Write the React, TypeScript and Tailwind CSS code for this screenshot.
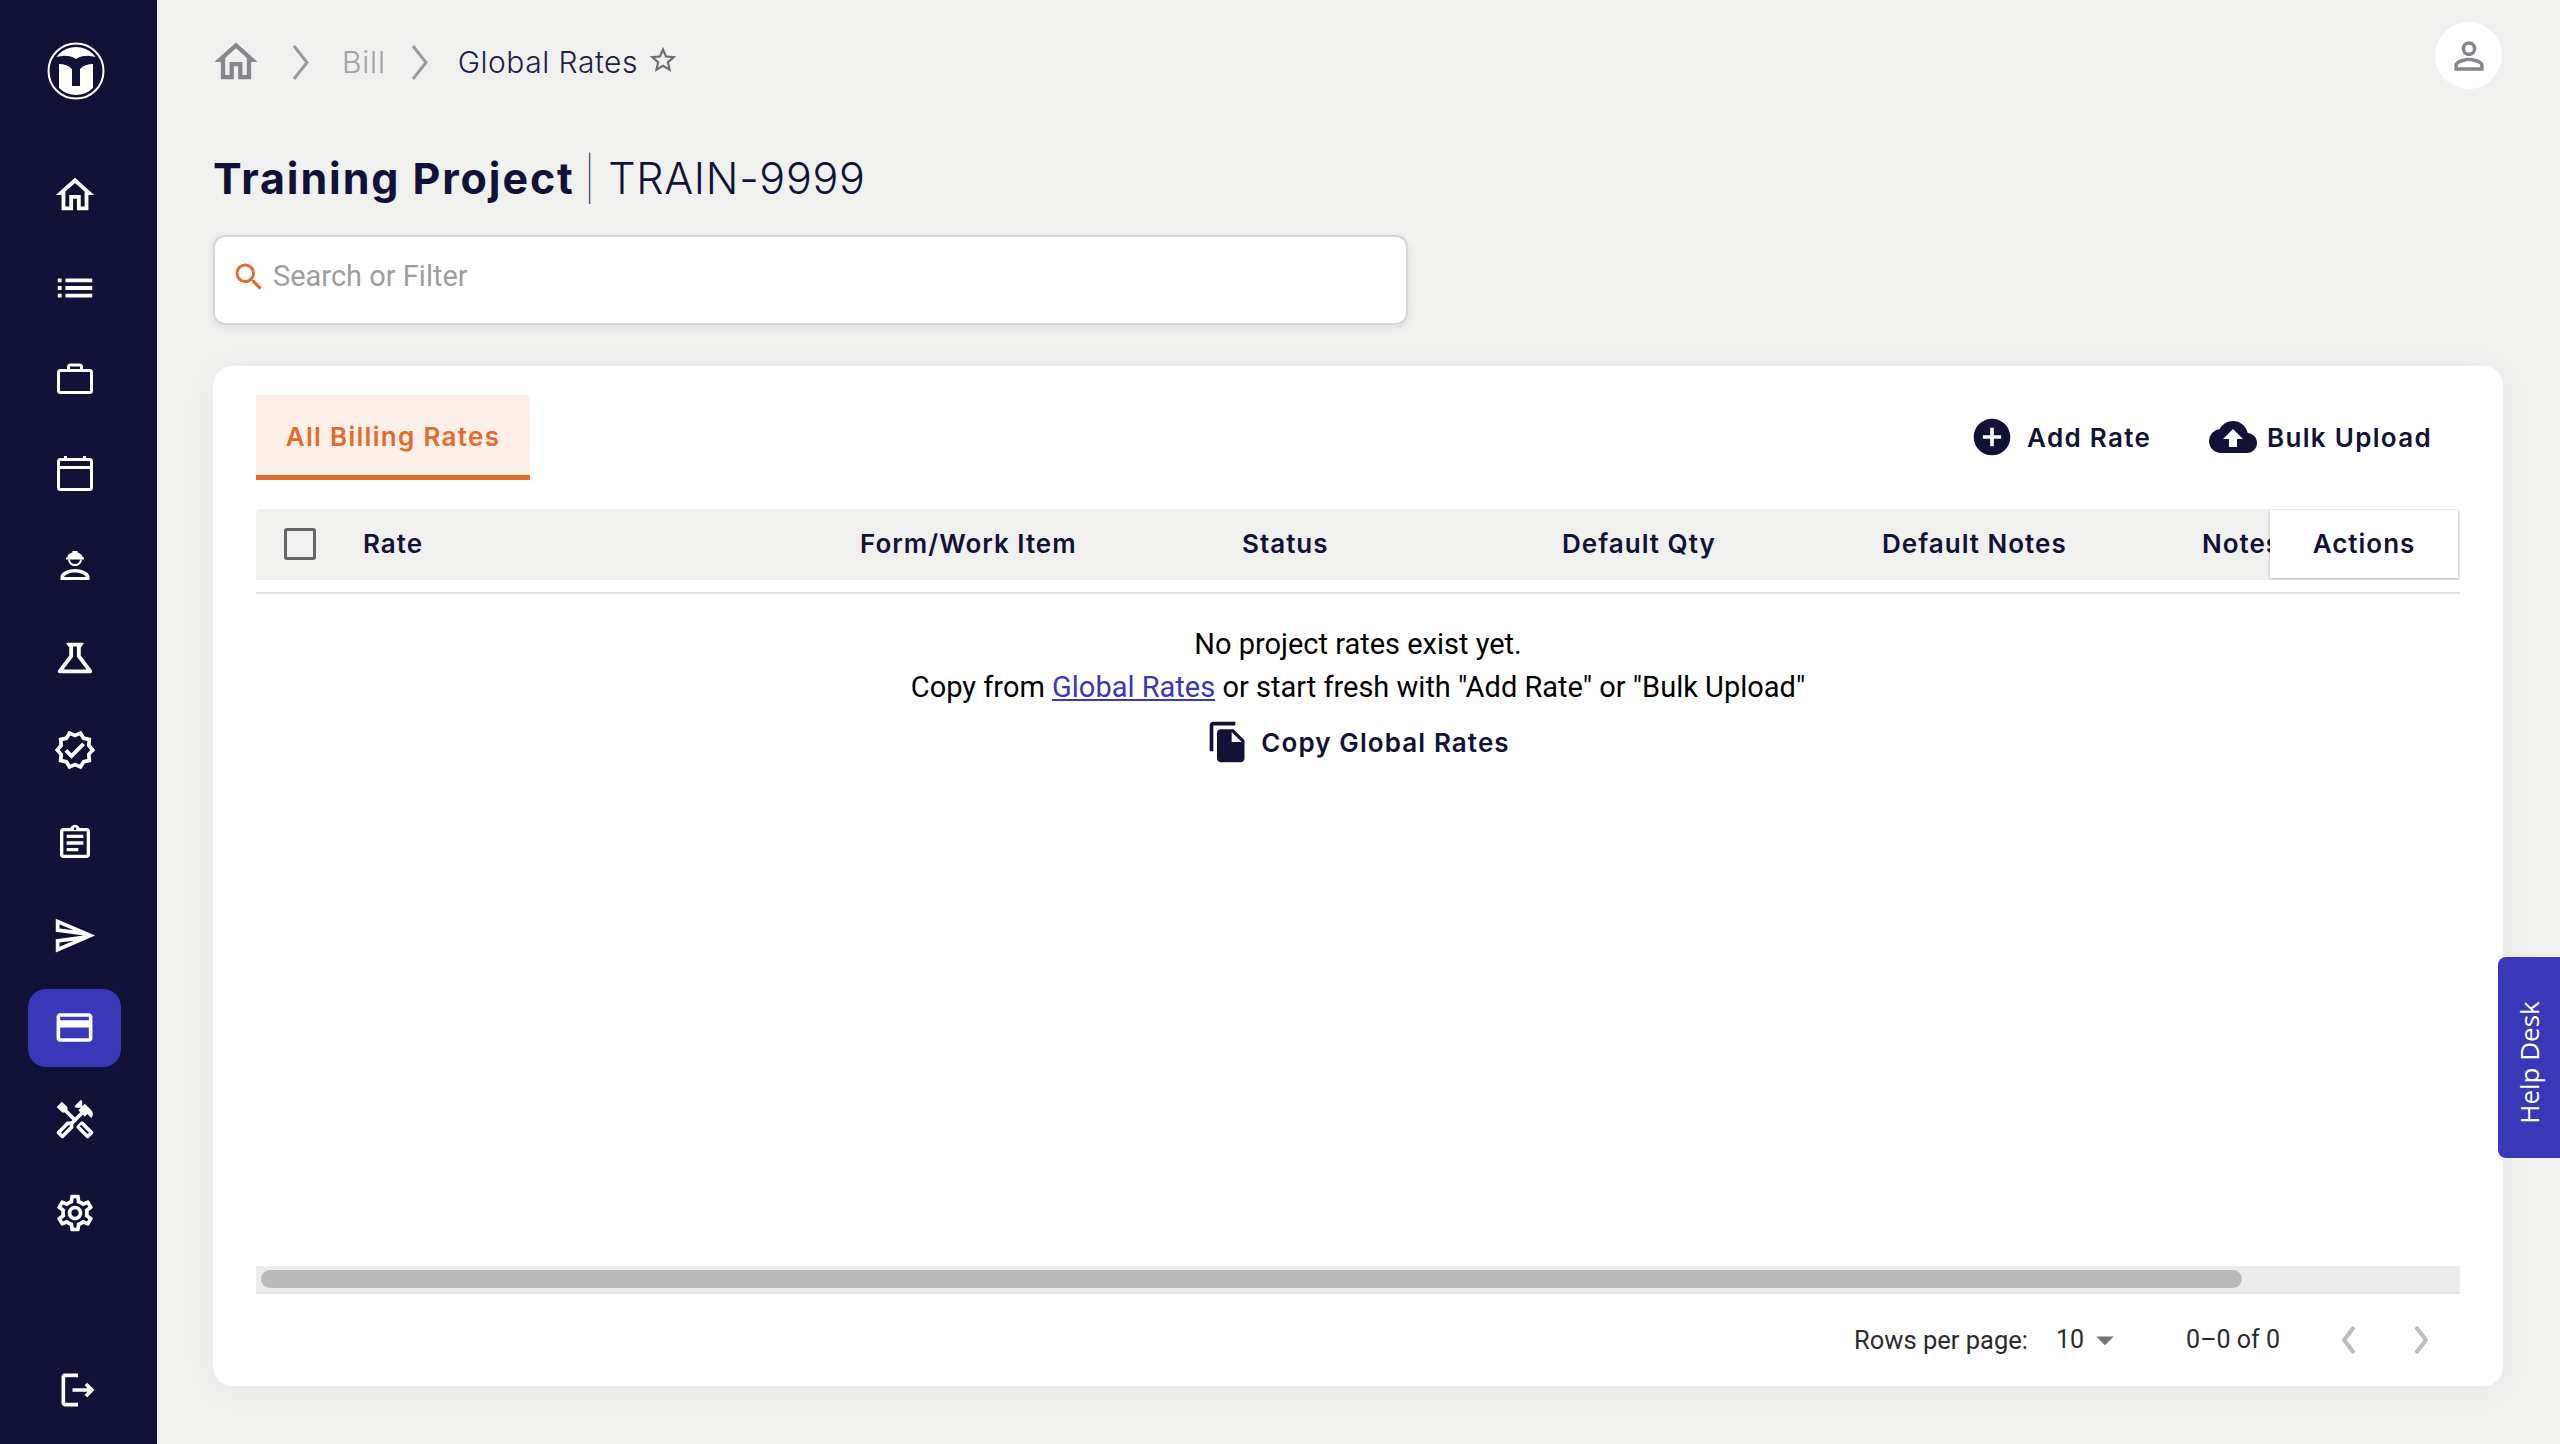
import React from 'react';
import {
  MdOutlineHome,
  MdOutlineList,
  MdOutlineScience,
  MdOutlineVerified,
  MdOutlineAssignment,
  MdOutlineSend,
  MdOutlineCreditCard,
  MdOutlineHandyman,
  MdOutlineSettings,
  MdOutlineLogout,
  MdOutlinePersonOutline,
  MdOutlineStarBorder,
  MdAddCircle,
  MdCloudUpload,
  MdFileCopy,
  MdSearch,
  MdArrowDropDown,
} from 'react-icons/md';

const HEADING = "font-['Inter','Liberation_Sans',sans-serif]";

function Logo() {
  return (
    <svg width="58" height="58" viewBox="0 0 58 58" aria-hidden="true">
      <defs>
        <clipPath id="logo-disk">
          <circle cx="29" cy="29" r="24" />
        </clipPath>
      </defs>
      <circle cx="29" cy="29" r="27.500" fill="none" stroke="white" strokeWidth="2" />
      <g clipPath="url(#logo-disk)" fill="white">
        <path d="M2 18 Q18 10 29 17 Q40 10 56 18 V0 H2 Z" />
        <path d="M12 22 Q20 22 25 27 V44 H33 V27 Q38 22 46 22 V58 H12 Z" />
      </g>
    </svg>
  );
}

function BriefcaseIcon() {
  return (
    <svg width="36" height="36" viewBox="0 0 36 36" fill="none" stroke="white" strokeWidth="3" aria-hidden="true">
      <rect x="1.500" y="8.500" width="33" height="22" rx="2" />
      <path d="M11.500 8V5a2 2 0 0 1 2-2h9a2 2 0 0 1 2 2v3" />
    </svg>
  );
}

function CalendarIcon() {
  return (
    <svg width="36" height="36" viewBox="0 0 36 36" fill="none" stroke="white" strokeWidth="3" aria-hidden="true">
      <rect x="1.500" y="4.500" width="33" height="30" rx="2" />
      <path d="M1.500 12.500h33M8.500 1v4M27.500 1v4" />
    </svg>
  );
}

function WorkerIcon() {
  return (
    <svg width="30" height="30" viewBox="0 0 30 30" fill="white" aria-hidden="true">
      <path d="M12.500 1h5v1.500c3 .8 5 3 5.300 5H24v2H6v-2h1.200c.3-2.500 2.300-4.200 5.300-5z" />
      <path fill="none" stroke="white" strokeWidth="2" d="M9 9.500a6 5.500 0 0 0 12 0" />
      <path
        fillRule="evenodd"
        d="M.5 30v-3C.5 22 8.500 19 15 19s14.500 3 14.500 8v3zm3.500-3h22c-1.500-2.500-6-4.500-11-4.500S5.500 24.500 4 27z"
      />
    </svg>
  );
}

// thin chevron used by breadcrumb and pagination
function Chevron({ dir = 'right', className = '', h = 37, sw = 3 }: { dir?: 'left' | 'right'; className?: string; h?: number; sw?: number }) {
  const w = Math.round(h * 0.45);
  return (
    <svg width={w} height={h} viewBox={`0 0 ${w} ${h}`} fill="none" stroke="currentColor" strokeWidth={sw} className={className} aria-hidden="true">
      <path d={dir === 'right' ? `M2 2L${w - 2} ${h / 2}L2 ${h - 2}` : `M${w - 2} 2L2 ${h / 2}L${w - 2} ${h - 2}`} />
    </svg>
  );
}

const navItems = [
  { key: 'home', icon: <MdOutlineHome size={46} /> },
  { key: 'list', icon: <MdOutlineList size={46} /> },
  { key: 'work', icon: <BriefcaseIcon /> },
  { key: 'calendar', icon: <CalendarIcon /> },
  { key: 'worker', icon: <WorkerIcon /> },
  { key: 'science', icon: <MdOutlineScience size={46} /> },
  { key: 'verified', icon: <MdOutlineVerified size={44} /> },
  { key: 'assignment', icon: <MdOutlineAssignment size={40} /> },
  { key: 'send', icon: <MdOutlineSend size={45} /> },
  { key: 'bill', icon: <MdOutlineCreditCard size={43} />, active: true },
  { key: 'tools', icon: <MdOutlineHandyman size={44} /> },
  { key: 'settings', icon: <MdOutlineSettings size={44} /> },
];

const columns = [
  { label: 'Form/Work Item', w: 'w-[382px]' },
  { label: 'Status', w: 'w-[320px]' },
  { label: 'Default Qty', w: 'w-[320px]' },
  { label: 'Default Notes', w: 'w-[320px]' },
  { label: 'Notes', w: 'w-[320px]' },
];

function Sidebar() {
  return (
    <aside className="w-[157px] shrink-0 h-full bg-[#121238] flex flex-col items-center pr-[8px] text-white">
      <div className="h-[42px] shrink-0" />
      <div className="ml-[3px]">
        <Logo />
      </div>
      <nav className="mt-[56px] flex flex-col">
        {navItems.map((item) => (
          <div
            key={item.key}
            className={
              'w-[93px] h-[78px] mb-[14.5px] rounded-[18px] flex items-center justify-center ' +
              (item.active ? 'bg-[#3838b8]' : '')
            }
          >
            {item.icon}
          </div>
        ))}
      </nav>
      <div className="mt-auto mb-[32px] ml-[6px] text-white">
        <MdOutlineLogout size={44} />
      </div>
    </aside>
  );
}

function Breadcrumb() {
  return (
    <div className="h-[122px] shrink-0 pt-[38px] flex items-start justify-between">
      <div className={`flex items-center h-[48px] text-[30px] ${HEADING}`}>
        <MdOutlineHome size={52} className="text-[#85878f] -ml-[3px]" />
        <Chevron className="text-[#9a9a9a] ml-[30px]" />
        <span className="ml-[33px] text-[#a0a0a4] font-light tracking-[0.8px]">Bill</span>
        <Chevron className="text-[#9a9a9a] ml-[25px]" />
        <span className="ml-[30px] text-[#1e1e46] font-light tracking-[0.5px]">Global Rates</span>
        <MdOutlineStarBorder size={32} className="text-[#6e6e6e] ml-[9px] -mt-[4px]" />
      </div>
      <div className="w-[67px] h-[67px] -mt-[16px] mr-[1px] rounded-full bg-white flex items-center justify-center">
        <MdOutlinePersonOutline size={44} className="text-[#85878f]" />
      </div>
    </div>
  );
}

function TableHeader() {
  const label = `pb-[2px] text-[26px] tracking-[1px] font-semibold text-[#121238] whitespace-nowrap ${HEADING}`;
  return (
    <div className="relative h-[71px] bg-[#f0f0ee] rounded-t-[4px] overflow-hidden flex items-center shrink-0">
      <div className="w-[107px] shrink-0 pl-[28px] pb-[1px]">
        <div className="w-[32px] h-[32px] border-[3px] border-[#666666] rounded-[3px]" />
      </div>
      <div className={`w-[497px] shrink-0 ${label}`}>Rate</div>
      {columns.map((c) => (
        <div key={c.label} className={`${c.w} shrink-0 ${label}`}>
          {c.label}
        </div>
      ))}
      <div className={`absolute right-[2px] top-[1px] bottom-[2px] w-[188px] bg-white shadow-[0_1px_3px_rgba(0,0,0,0.25)] flex items-center justify-center ${label}`}>
        Actions
      </div>
    </div>
  );
}

function EmptyState() {
  return (
    <div className="flex-1 flex flex-col items-center pt-[29px] text-[29px] leading-[43px] text-black font-['Roboto',sans-serif]">
      <div>No project rates exist yet.</div>
      <div>
        Copy from <span className="text-[#3838b8] underline">Global Rates</span> or start fresh with "Add Rate" or "Bulk Upload"
      </div>
      <div className={`mt-[11px] flex items-center gap-[11px] text-[26px] tracking-[1.100px] font-semibold text-[#121238] ${HEADING}`}>
        <MdFileCopy size={44} />
        Copy Global Rates
      </div>
    </div>
  );
}

function Pagination() {
  return (
    <div className="flex-1 flex items-center justify-end text-[25px] text-[#2b2b2b] font-['Roboto',sans-serif]">
      <span className="text-[25.500px]">Rows per page:</span>
      <span className="ml-[28px]">10</span>
      <MdArrowDropDown size={42} className="text-[#757575]" />
      <span className="ml-[60px]">0–0 of 0</span>
      <Chevron dir="left" h={30} sw={4} className="text-[#bdbdbd] ml-[62px]" />
      <Chevron dir="right" h={30} sw={4} className="text-[#bdbdbd] ml-[58px] mr-[32px]" />
    </div>
  );
}

export default function App() {
  return (
    <div className="relative w-[2560px] h-[1444px] overflow-hidden flex bg-[#f0f0ee]">
      <Sidebar />
      <main className="flex-1 min-w-0 flex flex-col pl-[56px] pr-[57px] pb-[58px]">
        <Breadcrumb />
        <h1 className={`h-[113px] shrink-0 pt-[30px] text-[43px] leading-[52px] text-[#121238] font-light tracking-[0.7px] whitespace-nowrap ${HEADING}`}>
          <span className="font-bold tracking-[1.9px]">Training Project</span>
          <span className="ml-[9px] font-thin">|</span>
          <span className="ml-[12px]">TRAIN-9999</span>
        </h1>
        <div className="w-[1195px] h-[90px] shrink-0 bg-white rounded-[12px] border-2 border-[#d6d6d6] shadow-[0_2px_8px_rgba(0,0,0,0.08)] flex items-center pl-[16px] pb-[6px] font-['Roboto',sans-serif] text-[29px] text-[#9e9e9e]">
          <MdSearch size={36} className="text-[#e06c2e]" />
          <span className="ml-[6px]">Search or Filter</span>
        </div>
        <section className="mt-[41px] flex-1 min-h-0 bg-white rounded-[20px] shadow-[0_4px_40px_rgba(0,0,0,0.04)] px-[43px] pt-[29px] flex flex-col">
          <div className="h-[85px] shrink-0 flex items-center justify-between">
            <div className={`h-full w-[274px] pt-[3px] bg-[#fcefe8] border-b-[5px] border-[#e06c2e] flex items-center justify-center text-[26px] tracking-[1.300px] font-semibold text-[#e06c2e] whitespace-nowrap ${HEADING}`}>
              All Billing Rates
            </div>
            <div className={`flex items-center pr-[28px] pb-[1px] text-[26px] tracking-[1.300px] font-semibold text-[#121238] ${HEADING}`}>
              <MdAddCircle size={44} />
              <span className="ml-[13px]">Add Rate</span>
              <MdCloudUpload size={48} className="ml-[58px]" />
              <span className="ml-[10px]">Bulk Upload</span>
            </div>
          </div>
          <div className="mt-[29px] flex-1 min-h-0 flex flex-col">
            <TableHeader />
            <div className="mt-[12px] h-[2px] bg-[#e2e2e2] shrink-0" />
            <EmptyState />
            <div className="h-[28px] shrink-0 bg-[#ececec] border-b-2 border-[#e4e4e4] flex items-center pl-[5px]">
              <div className="w-[1981px] h-[18px] rounded-full bg-[#bababa]" />
            </div>
          </div>
          <div className="h-[92px] shrink-0 flex">
            <Pagination />
          </div>
        </section>
      </main>
      <div className="absolute right-0 top-[957px] w-[62px] h-[201px] bg-[#3838b8] rounded-l-[8px] flex items-center justify-center">
        <span className="mt-[10px] -rotate-90 whitespace-nowrap text-white text-[26px] font-['Open_Sans',sans-serif]">Help Desk</span>
      </div>
    </div>
  );
}
